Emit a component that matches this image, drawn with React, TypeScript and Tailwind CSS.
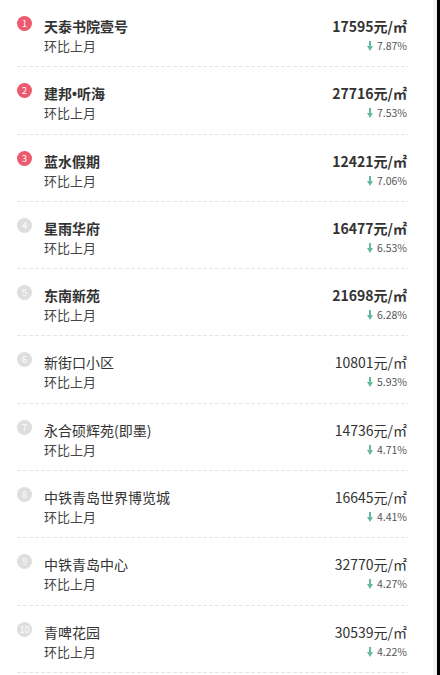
import React from 'react';

interface Item {
  rank: number;
  name: React.ReactNode;
  price: string;
  change: string;
}

const items: Item[] = [
  { rank: 1, name: '天泰书院壹号', price: '17595', change: '7.87%' },
  {
    rank: 2,
    name: (
      <>
        建邦<span className="font-['Liberation_Sans',sans-serif]">•</span>听海
      </>
    ),
    price: '27716',
    change: '7.53%',
  },
  { rank: 3, name: '蓝水假期', price: '12421', change: '7.06%' },
  { rank: 4, name: '星雨华府', price: '16477', change: '6.53%' },
  { rank: 5, name: '东南新苑', price: '21698', change: '6.28%' },
  { rank: 6, name: '新街口小区', price: '10801', change: '5.93%' },
  { rank: 7, name: '永合硕辉苑(即墨)', price: '14736', change: '4.71%' },
  { rank: 8, name: '中铁青岛世界博览城', price: '16645', change: '4.41%' },
  { rank: 9, name: '中铁青岛中心', price: '32770', change: '4.27%' },
  { rank: 10, name: '青啤花园', price: '30539', change: '4.22%' },
];

function DownArrow() {
  return (
    <svg width="6" height="10" viewBox="0 0 6 10" className="shrink-0">
      <rect x="2" y="0" width="2" height="6" fill="#66b99b" />
      <polygon points="0,5 6,5 3,10" fill="#66b99b" />
    </svg>
  );
}

export default function App() {
  return (
    <div className="flex h-[675px] w-[440px] overflow-hidden bg-white font-['Noto_Sans_CJK_SC',sans-serif]">
      <div className="w-[433px] bg-white">
        <div className="ml-[17px] w-[391px]">
          {items.map((item) => {
            const top = item.rank <= 3;
            const bold = item.rank <= 5;
            return (
              <div key={item.rank} className="flex h-[67.3px] flex-col">
                <div className="flex flex-1 pt-[16px]">
                  <div
                    className={`flex h-[15px] w-[15px] shrink-0 items-center justify-center rounded-full text-[9px] leading-none text-white ${
                      top ? 'bg-[#ec5a6e]' : 'bg-[#dedede]'
                    }`}
                  >
                    {item.rank}
                  </div>
                  <div className="ml-[12px] flex flex-col">
                    <div
                      className={`h-[20px] text-[14px] leading-[20px] text-[#333] ${
                        bold ? 'font-bold' : 'font-normal'
                      }`}
                    >
                      {item.name}
                    </div>
                    <div className="h-[20px] text-[13px] leading-[20px] text-[#444]">环比上月</div>
                  </div>
                  <div className="ml-auto flex flex-col items-end pr-[1px]">
                    <div
                      className={`h-[20px] text-[14px] leading-[20px] text-[#333] ${
                        bold ? 'font-bold' : 'font-normal'
                      }`}
                    >
                      {item.price}元/㎡
                    </div>
                    <div className="flex h-[20px] items-center gap-[4px] text-[10.5px] leading-[20px] text-[#555]">
                      <DownArrow />
                      <span>{item.change}</span>
                    </div>
                  </div>
                </div>
                <div className="h-px w-full bg-[linear-gradient(to_right,#e6e6e6_4px,transparent_4px)] bg-[length:6px_1px] bg-repeat-x" />
              </div>
            );
          })}
        </div>
      </div>
      <div className="w-[4px] bg-[#f2f2f2]" />
      <div className="w-[3px] bg-black" />
    </div>
  );
}
